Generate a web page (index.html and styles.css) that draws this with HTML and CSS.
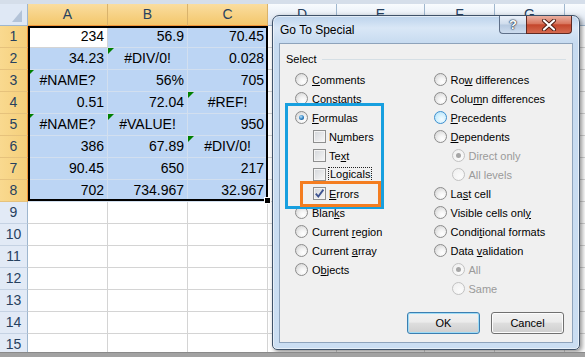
FILE: index.html
```html
<!DOCTYPE html>
<html>
<head>
<meta charset="utf-8">
<link rel="stylesheet" href="styles.css">
</head>
<body>
<div class="sheet">
  <div class="topband"></div>
  <div class="grid">
    <div class="corner"><span class="tri"></span></div>
    <div class="ch s">A</div><div class="ch s">B</div><div class="ch s">C</div><div class="ch">D</div><div class="ch">E</div><div class="ch">F</div><div class="ch">G</div><div class="ch"></div>

    <div class="rh s">1</div><div class="c a1">234</div><div class="c s">56.9</div><div class="c s">70.45</div><div class="c"></div><div class="c"></div><div class="c"></div><div class="c"></div><div class="c"></div>
    <div class="rh s">2</div><div class="c s">34.23</div><div class="c s e t">#DIV/0!</div><div class="c s">0.028</div><div class="c"></div><div class="c"></div><div class="c"></div><div class="c"></div><div class="c"></div>
    <div class="rh s">3</div><div class="c s e t">#NAME?</div><div class="c s">56%</div><div class="c s">705</div><div class="c"></div><div class="c"></div><div class="c"></div><div class="c"></div><div class="c"></div>
    <div class="rh s">4</div><div class="c s">0.51</div><div class="c s">72.04</div><div class="c s e t">#REF!</div><div class="c"></div><div class="c"></div><div class="c"></div><div class="c"></div><div class="c"></div>
    <div class="rh s">5</div><div class="c s e t">#NAME?</div><div class="c s e t">#VALUE!</div><div class="c s">950</div><div class="c"></div><div class="c"></div><div class="c"></div><div class="c"></div><div class="c"></div>
    <div class="rh s">6</div><div class="c s">386</div><div class="c s">67.89</div><div class="c s e t">#DIV/0!</div><div class="c"></div><div class="c"></div><div class="c"></div><div class="c"></div><div class="c"></div>
    <div class="rh s">7</div><div class="c s">90.45</div><div class="c s">650</div><div class="c s">217</div><div class="c"></div><div class="c"></div><div class="c"></div><div class="c"></div><div class="c"></div>
    <div class="rh s">8</div><div class="c s">702</div><div class="c s">734.967</div><div class="c s">32.967</div><div class="c"></div><div class="c"></div><div class="c"></div><div class="c"></div><div class="c"></div>
    <div class="rh">9</div><div class="c"></div><div class="c"></div><div class="c"></div><div class="c"></div><div class="c"></div><div class="c"></div><div class="c"></div><div class="c"></div>
    <div class="rh">10</div><div class="c"></div><div class="c"></div><div class="c"></div><div class="c"></div><div class="c"></div><div class="c"></div><div class="c"></div><div class="c"></div>
    <div class="rh">11</div><div class="c"></div><div class="c"></div><div class="c"></div><div class="c"></div><div class="c"></div><div class="c"></div><div class="c"></div><div class="c"></div>
    <div class="rh">12</div><div class="c"></div><div class="c"></div><div class="c"></div><div class="c"></div><div class="c"></div><div class="c"></div><div class="c"></div><div class="c"></div>
    <div class="rh">13</div><div class="c"></div><div class="c"></div><div class="c"></div><div class="c"></div><div class="c"></div><div class="c"></div><div class="c"></div><div class="c"></div>
    <div class="rh">14</div><div class="c"></div><div class="c"></div><div class="c"></div><div class="c"></div><div class="c"></div><div class="c"></div><div class="c"></div><div class="c"></div>
    <div class="rh">15</div><div class="c"></div><div class="c"></div><div class="c"></div><div class="c"></div><div class="c"></div><div class="c"></div><div class="c"></div><div class="c"></div>
  </div>
  <div class="selbox"></div>
  <div class="handle"></div>

  <div class="dialog">
    <div class="titlebar">
      <span class="title">Go To Special</span>
      <div class="capbtns">
        <span class="help">?</span>
        <span class="close">
          <svg width="16" height="12" viewBox="0 0 16 12"><path d="M3 1.5 L13 10.5 M13 1.5 L3 10.5" stroke="#4a1a12" stroke-width="4" stroke-linecap="round"/><path d="M3 1.5 L13 10.5 M13 1.5 L3 10.5" stroke="#fff" stroke-width="2.2" stroke-linecap="round"/></svg>
        </span>
      </div>
    </div>
    <div class="client">
      <div class="legend"><span>Select</span></div>
      <div class="cols">
        <div class="col">
          <div class="opt"><span class="rad"></span><span><u>C</u>omments</span></div>
          <div class="opt"><span class="rad"></span><span>C<u>o</u>nstants</span></div>
          <div class="opt"><span class="rad on"></span><span><u>F</u>ormulas</span></div>
          <div class="opt sub cb"><span class="chk"></span><span>N<u>u</u>mbers</span></div>
          <div class="opt sub cb"><span class="chk"></span><span>Te<u>x</u>t</span></div>
          <div class="opt sub cb"><span class="chk"></span><span class="focus">Lo<u>g</u>icals</span></div>
          <div class="opt sub cb"><span class="chk"><svg width="11" height="11" viewBox="0 0 11 11"><path d="M1.8 5.6 L4.3 8.6 L9.4 1.6" fill="none" stroke="#3d5390" stroke-width="1.8"/></svg></span><span><u>E</u>rrors</span></div>
          <div class="opt"><span class="rad"></span><span>Blan<u>k</u>s</span></div>
          <div class="opt"><span class="rad"></span><span>Current <u>r</u>egion</span></div>
          <div class="opt"><span class="rad"></span><span>Current <u>a</u>rray</span></div>
          <div class="opt"><span class="rad"></span><span>O<u>b</u>jects</span></div>
        </div>
        <div class="col">
          <div class="opt"><span class="rad"></span><span>Ro<u>w</u> differences</span></div>
          <div class="opt"><span class="rad"></span><span>Colu<u>m</u>n differences</span></div>
          <div class="opt"><span class="rad hov"></span><span><u>P</u>recedents</span></div>
          <div class="opt"><span class="rad"></span><span><u>D</u>ependents</span></div>
          <div class="opt sub dis"><span class="rad on"></span><span>Direct only</span></div>
          <div class="opt sub dis"><span class="rad"></span><span>All levels</span></div>
          <div class="opt"><span class="rad"></span><span>La<u>s</u>t cell</span></div>
          <div class="opt"><span class="rad"></span><span>Visible cells onl<u>y</u></span></div>
          <div class="opt"><span class="rad"></span><span>Condi<u>t</u>ional formats</span></div>
          <div class="opt"><span class="rad"></span><span>Data <u>v</u>alidation</span></div>
          <div class="opt sub dis"><span class="rad on"></span><span>All</span></div>
          <div class="opt sub dis"><span class="rad"></span><span>Same</span></div>
        </div>
      </div>
      <div class="btns">
        <button class="btn def">OK</button>
        <button class="btn">Cancel</button>
      </div>
    </div>
    <div class="mark blue"></div>
    <div class="mark orange"></div>
  </div>
</div>
<div class="bottombar"></div>
</body>
</html>
```
FILE: styles.css
```css
* { box-sizing: border-box; }
body {
  margin: 0;
  width: 585px;
  height: 357px;
  overflow: hidden;
  background: #fff;
  font-family: "Liberation Sans", Arial, sans-serif;
  display: flex;
  flex-direction: column;
}
.sheet {
  height: 352px;
  overflow: hidden;
  position: relative;
  flex: none;
}
.topband { height: 4px; background: #d5deea; }
.grid {
  display: grid;
  grid-template-columns: 28px 80px 80px 80px 69px 88px 70px 70px 70px;
  grid-auto-rows: 22px;
  font-size: 14px;
  width: 635px;
}
.corner {
  position: relative;
  background: #dfe8f5;
  border-right: 1px solid #9eb6ce;
  border-bottom: 1px solid #9eb6ce;
}
.tri {
  position: absolute;
  right: 5px;
  bottom: 3px;
  width: 10px;
  height: 12px;
  background: #b3c3d8;
  clip-path: polygon(100% 0, 100% 100%, 0 100%);
}
.ch {
  text-align: center;
  line-height: 21px;
  color: #27415f;
  background: linear-gradient(#f8fbfe, #dce5f1);
  border-right: 1px solid #9eb6ce;
  border-bottom: 1px solid #9eb6ce;
}
.ch.s {
  background: linear-gradient(#fadd9f, #f3c76c);
  border-right-color: #d9b36c;
  border-bottom: 1px solid #f29436;
}
.rh {
  text-align: center;
  line-height: 21px;
  color: #27415f;
  background: #e2eaf6;
  border-right: 1px solid #9eb6ce;
  border-bottom: 1px solid #c5d2e3;
}
.rh.s {
  background: linear-gradient(90deg, #f9d98f, #f5cf7b);
  border-right-color: #f29436;
  border-bottom-color: #e6c27c;
}
.c {
  position: relative;
  text-align: right;
  padding-right: 3px;
  line-height: 21px;
  white-space: nowrap;
  color: #000;
  border-right: 1px solid #d4d4d4;
  border-bottom: 1px solid #d4d4d4;
}
.c.s { background: #bcd5f4; border-color: #d2dfef; }
.c.a1 { background: #fff; }
.c.e { text-align: center; padding-right: 0; }
.c.t::before {
  content: "";
  position: absolute;
  left: 0;
  top: 0;
  border-top: 6px solid #008000;
  border-right: 6px solid transparent;
}
.selbox {
  position: absolute;
  left: 28px;
  top: 26px;
  width: 240px;
  height: 175px;
  border: 2px solid #000;
  pointer-events: none;
}
.handle {
  position: absolute;
  left: 264px;
  top: 197px;
  width: 7px;
  height: 7px;
  background: #000;
  border: 1px solid #fff;
}

/* dialog */
.dialog {
  position: absolute;
  left: 272px;
  top: 15px;
  width: 308px;
  height: 335px;
  border: 1px solid #3f5269;
  border-radius: 7px 7px 5px 5px;
  background: linear-gradient(180deg, #bcd3ec 0, #d9e7f6 12px, #c7dbf0 27px, #cbdef2 100%);
  box-shadow: 2px 2px 5px rgba(0,0,0,0.45), inset 0 0 0 1px rgba(255,255,255,0.55);
  display: flex;
  flex-direction: column;
  padding: 0 6px 6px;
}
.titlebar {
  height: 27px;
  display: flex;
  align-items: flex-start;
  flex: none;
}
.title {
  font-size: 12px;
  line-height: 28px;
  padding-left: 1px;
  color: #000;
}
.capbtns {
  margin-left: auto;
  margin-right: 1px;
  display: flex;
}
.help {
  width: 27px;
  height: 18px;
  border: 1px solid #5f7089;
  border-top: none;
  border-right: none;
  border-radius: 0 0 0 4px;
  background: linear-gradient(#e9f0f9, #cfdcec 48%, #b6c9e0 52%, #cddcee);
  text-align: center;
  font: bold 13px/17px "Liberation Sans", Arial, sans-serif;
  color: #fff;
  text-shadow: 0 0 1px #1d2f47, 0 0 1px #1d2f47, 0 0 2px #1d2f47;
}
.close {
  width: 46px;
  height: 18px;
  border: 1px solid #5f2a22;
  border-top: none;
  border-radius: 0 0 4px 0;
  background: linear-gradient(#eab0a2, #d9775f 45%, #c4462c 52%, #d56a4f 100%);
  display: flex;
  align-items: center;
  justify-content: center;
}
.client {
  flex: 1;
  background: #f0f0f0;
  border: 1px solid #8ea3bb;
  display: flex;
  flex-direction: column;
  padding: 5px 0 8px;
  font-size: 11px;
  color: #000;
}
.legend {
  display: flex;
  align-items: center;
  height: 20px;
  padding-left: 6px;
  margin-right: 6px;
}
.legend::after {
  content: "";
  flex: 1;
  height: 1px;
  background: #d5dfe5;
  margin-left: 5px;
}
.cols {
  display: flex;
  padding-left: 15px;
  margin-top: 1px;
}
.col { width: 140px; }
.opt {
  display: flex;
  align-items: center;
  height: 19px;
  gap: 4px;
  white-space: nowrap;
}
.opt.sub { padding-left: 18px; }
.opt.cb { gap: 3px; }
.opt.dis { color: #9a9a9a; }
.rad {
  position: relative;
  flex: none;
  width: 13px;
  height: 13px;
  border-radius: 50%;
  border: 1px solid #8c8c8c;
  background: radial-gradient(circle at 65% 70%, #ffffff 0, #f3f3f3 35%, #d6d6d6 85%);
}
.rad.on::after {
  content: "";
  position: absolute;
  left: 3px;
  top: 3px;
  width: 5px;
  height: 5px;
  border-radius: 50%;
  background: radial-gradient(circle at 40% 35%, #b8e3fb, #2c7ec0 55%, #0f3f72);
}
.rad.hov {
  border-color: #3c8fcf;
  background: radial-gradient(circle at 60% 65%, #f3fbff, #cdeefd 55%, #a9dbf5);
}
.dis .rad {
  border-color: #c2c2c2;
  background: radial-gradient(circle at 65% 70%, #fbfbfb, #eeeeee);
}
.dis .rad.on::after { background: #a6a6a6; }
.chk {
  flex: none;
  width: 13px;
  height: 13px;
  border: 1px solid #8e8f8f;
  background: linear-gradient(135deg, #d3d6da, #f8f8f8);
  box-shadow: inset 0 0 0 1px #f4f4f4;
  display: flex;
  align-items: center;
  justify-content: center;
}
.focus {
  border: 1px dotted #222;
  padding: 0 1px;
  margin-left: -1px;
  line-height: 13px;
}
.btns {
  margin-top: auto;
  display: flex;
  justify-content: flex-end;
  gap: 11px;
  padding-right: 8px;
}
.btn {
  width: 73px;
  height: 22px;
  border: 1px solid #707070;
  border-radius: 3px;
  background: linear-gradient(#f2f2f2, #ebebeb 45%, #dddddd 52%, #cfcfcf);
  box-shadow: inset 0 0 0 1px #fcfcfc;
  font: 11px "Liberation Sans", Arial, sans-serif;
  color: #000;
  padding: 0;
}
.btn.def {
  border-color: #3c7fb1;
  box-shadow: inset 0 0 0 1px #9fdcf6;
}
.mark {
  position: absolute;
  pointer-events: none;
}
.mark.blue {
  left: 12px;
  top: 87px;
  width: 99px;
  height: 106px;
  border: 3px solid #179fdf;
}
.mark.orange {
  left: 27px;
  top: 165px;
  width: 81px;
  height: 26px;
  border: 3px solid #f47d20;
}
.bottombar {
  height: 5px;
  flex: none;
  background: #a2a2a2;
  border-top: 1px solid #8a8a8a;
}
```
